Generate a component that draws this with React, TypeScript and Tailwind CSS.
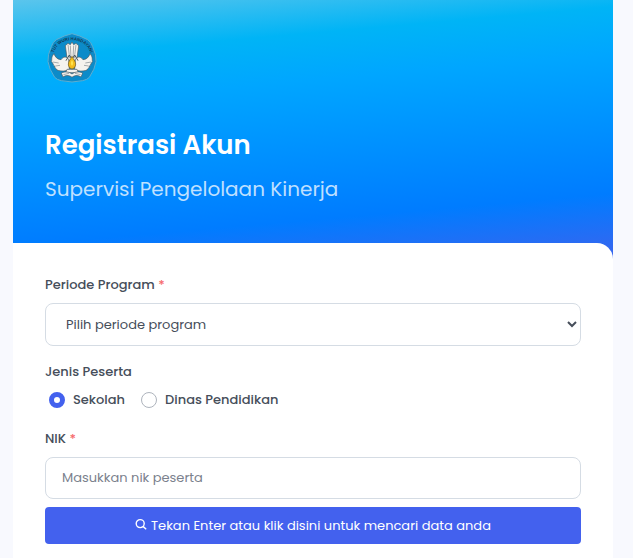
import React, { useState } from "react";

const pesertaOptions = [
  { value: "sekolah", label: "Sekolah" },
  { value: "dinas", label: "Dinas Pendidikan" },
];

function Logo() {
  return (
    <svg viewBox="0 0 150 150" className="h-[50px] w-[50px]" role="img" aria-label="Tut Wuri Handayani">
      <path
        d="M75 2 Q98 7 122 20 Q132 26 137 41 Q149 66 147 86 Q144 108 127 133 Q121 140 107 143 Q75 151 43 143 Q29 140 23 133 Q6 108 3 86 Q1 66 13 41 Q18 26 28 20 Q52 7 75 2Z"
        fill="#0c8bc9"
        stroke="#5faed0"
        strokeWidth="3"
      />
      <path id="motto" d="M20 62 C32 8 118 8 130 62" fill="none" />
      <text className="font-['Liberation_Sans'] font-bold" fontSize="13" fill="#123a55" textAnchor="middle">
        <textPath href="#motto" startOffset="50%">
          TUT WURI HANDAYANI
        </textPath>
      </text>
      <g fill="#f5f3ee" stroke="#4c5960" strokeWidth="2" strokeLinejoin="round">
        <path d="M55 38 L63 31 L70 35 L75 27 L80 35 L87 31 L95 38 L89 82 L61 82Z" />
        <path d="M65 78 C54 68 48 73 42 80 C31 79 25 73 21 62 C11 73 16 82 13 86 C20 91 17 96 23 99 C21 105 29 106 30 111 C43 116 57 115 67 108Z" />
        <path d="M85 78 C96 68 102 73 108 80 C119 79 125 73 129 62 C139 73 134 82 137 86 C130 91 133 96 127 99 C129 105 121 106 120 111 C107 116 93 115 83 108Z" />
        <path d="M60 109 L90 109 L94 119 L56 119Z" />
        <path d="M43 120 C56 114 67 117 75 123 C83 117 94 114 107 120 L102 132 C91 125 82 127 75 133 C68 127 59 125 48 132Z" />
      </g>
      <g fill="none" stroke="#7d878c" strokeWidth="2">
        <path d="M63 35 L68 76 M70 38 L72 74 M80 38 L78 74 M87 35 L82 76" />
        <path d="M17 87 L35 90 M25 99 L39 97 M133 87 L115 90 M125 99 L111 97" />
        <path d="M49 125 L66 121 M101 125 L84 121" />
      </g>
      <path d="M57 83 L67 66 L75 79 L83 66 L93 83" fill="none" stroke="#465359" strokeWidth="3" />
      <path d="M75 70 C79 79 87 85 86 96 Q84 107 75 108 Q66 107 64 96 C63 85 71 79 75 70Z" fill="#f2bc1b" stroke="#735b20" strokeWidth="2" />
      <path d="M75 81 Q82 92 75 99 Q68 92 75 81Z" fill="#ffe34d" />
    </svg>
  );
}

function SearchIcon() {
  return (
    <svg viewBox="0 0 12 12" className="mb-1 h-3 w-3" fill="none" stroke="currentColor" strokeWidth="1.4" aria-hidden="true">
      <circle cx="5.2" cy="5.6" r="4" />
      <path d="M8 8.4 L11.2 11.2" />
    </svg>
  );
}

export default function App() {
  const [periode, setPeriode] = useState("");
  const [peserta, setPeserta] = useState("sekolah");
  const [nik, setNik] = useState("");

  return (
    <div className="min-h-screen bg-[#f8f9fe] pr-5 pl-[13px] font-[Poppins,Inter,sans-serif] text-[#464e5a]">
      <main className="mx-auto max-w-[600px]">
        <header className="bg-[linear-gradient(175deg,#5bc5ec_0%,#00b4f6_19%,#00a6ff_34%,#007cff_79%,#3b64ee_100%)] px-8 pt-[33px] pb-[50px]">
          <div className="pl-0.5">
            <Logo />
          </div>
          <h1 className="mt-[42px] text-[26px] leading-10 font-semibold text-white">Registrasi Akun</h1>
          <p className="mt-1 text-xl leading-10 text-white/75">Supervisi Pengelolaan Kinerja</p>
        </header>

        <form
          className="-mt-4 rounded-tr-2xl bg-white px-8 pt-8 pb-6 text-[13px] leading-5"
          onSubmit={(e) => e.preventDefault()}
        >
          <label htmlFor="periode" className="block font-medium">
            Periode Program <span className="text-[#f6696b]">*</span>
          </label>
          <div className="relative mt-2">
            <select
              id="periode"
              value={periode}
              onChange={(e) => setPeriode(e.target.value)}
              className="block h-[43px] w-full appearance-none rounded-lg border border-[#d5dce4] bg-white px-5"
            >
              <option value="">Pilih periode program</option>
            </select>
            <svg viewBox="0 0 10 7" className="pointer-events-none absolute top-[18px] right-1 h-[7px] w-2.5" fill="none" stroke="currentColor" strokeWidth="2" aria-hidden="true">
              <path d="M1 1 L5 5 L9 1" />
            </svg>
          </div>

          <fieldset className="mt-4">
            <legend className="font-medium">Jenis Peserta</legend>
            <div className="mt-2 flex gap-4 pl-1">
              {pesertaOptions.map((item) => (
                <label key={item.value} className="flex items-center gap-2 font-medium">
                  <input
                    type="radio"
                    name="peserta"
                    value={item.value}
                    checked={peserta === item.value}
                    onChange={() => setPeserta(item.value)}
                    className="h-4 w-4 appearance-none rounded-full border border-[#aeb4bd] bg-white checked:border-5 checked:border-[#4361ee]"
                  />
                  {item.label}
                </label>
              ))}
            </div>
          </fieldset>

          <label htmlFor="nik" className="mt-[19px] block font-medium">
            NIK <span className="text-[#f6696b]">*</span>
          </label>
          <input
            id="nik"
            type="text"
            value={nik}
            onChange={(e) => setNik(e.target.value)}
            placeholder="Masukkan nik peserta"
            className="mt-2 block h-[42px] w-full rounded-lg border border-[#d5dce4] bg-white px-4 placeholder:text-[#7b818d]"
          />
          <button
            type="submit"
            className="mt-2 flex h-[37px] w-full items-center justify-center gap-1 rounded bg-[#4361ee] text-white"
          >
            <SearchIcon />
            Tekan Enter atau klik disini untuk mencari data anda
          </button>
        </form>
      </main>
    </div>
  );
}
